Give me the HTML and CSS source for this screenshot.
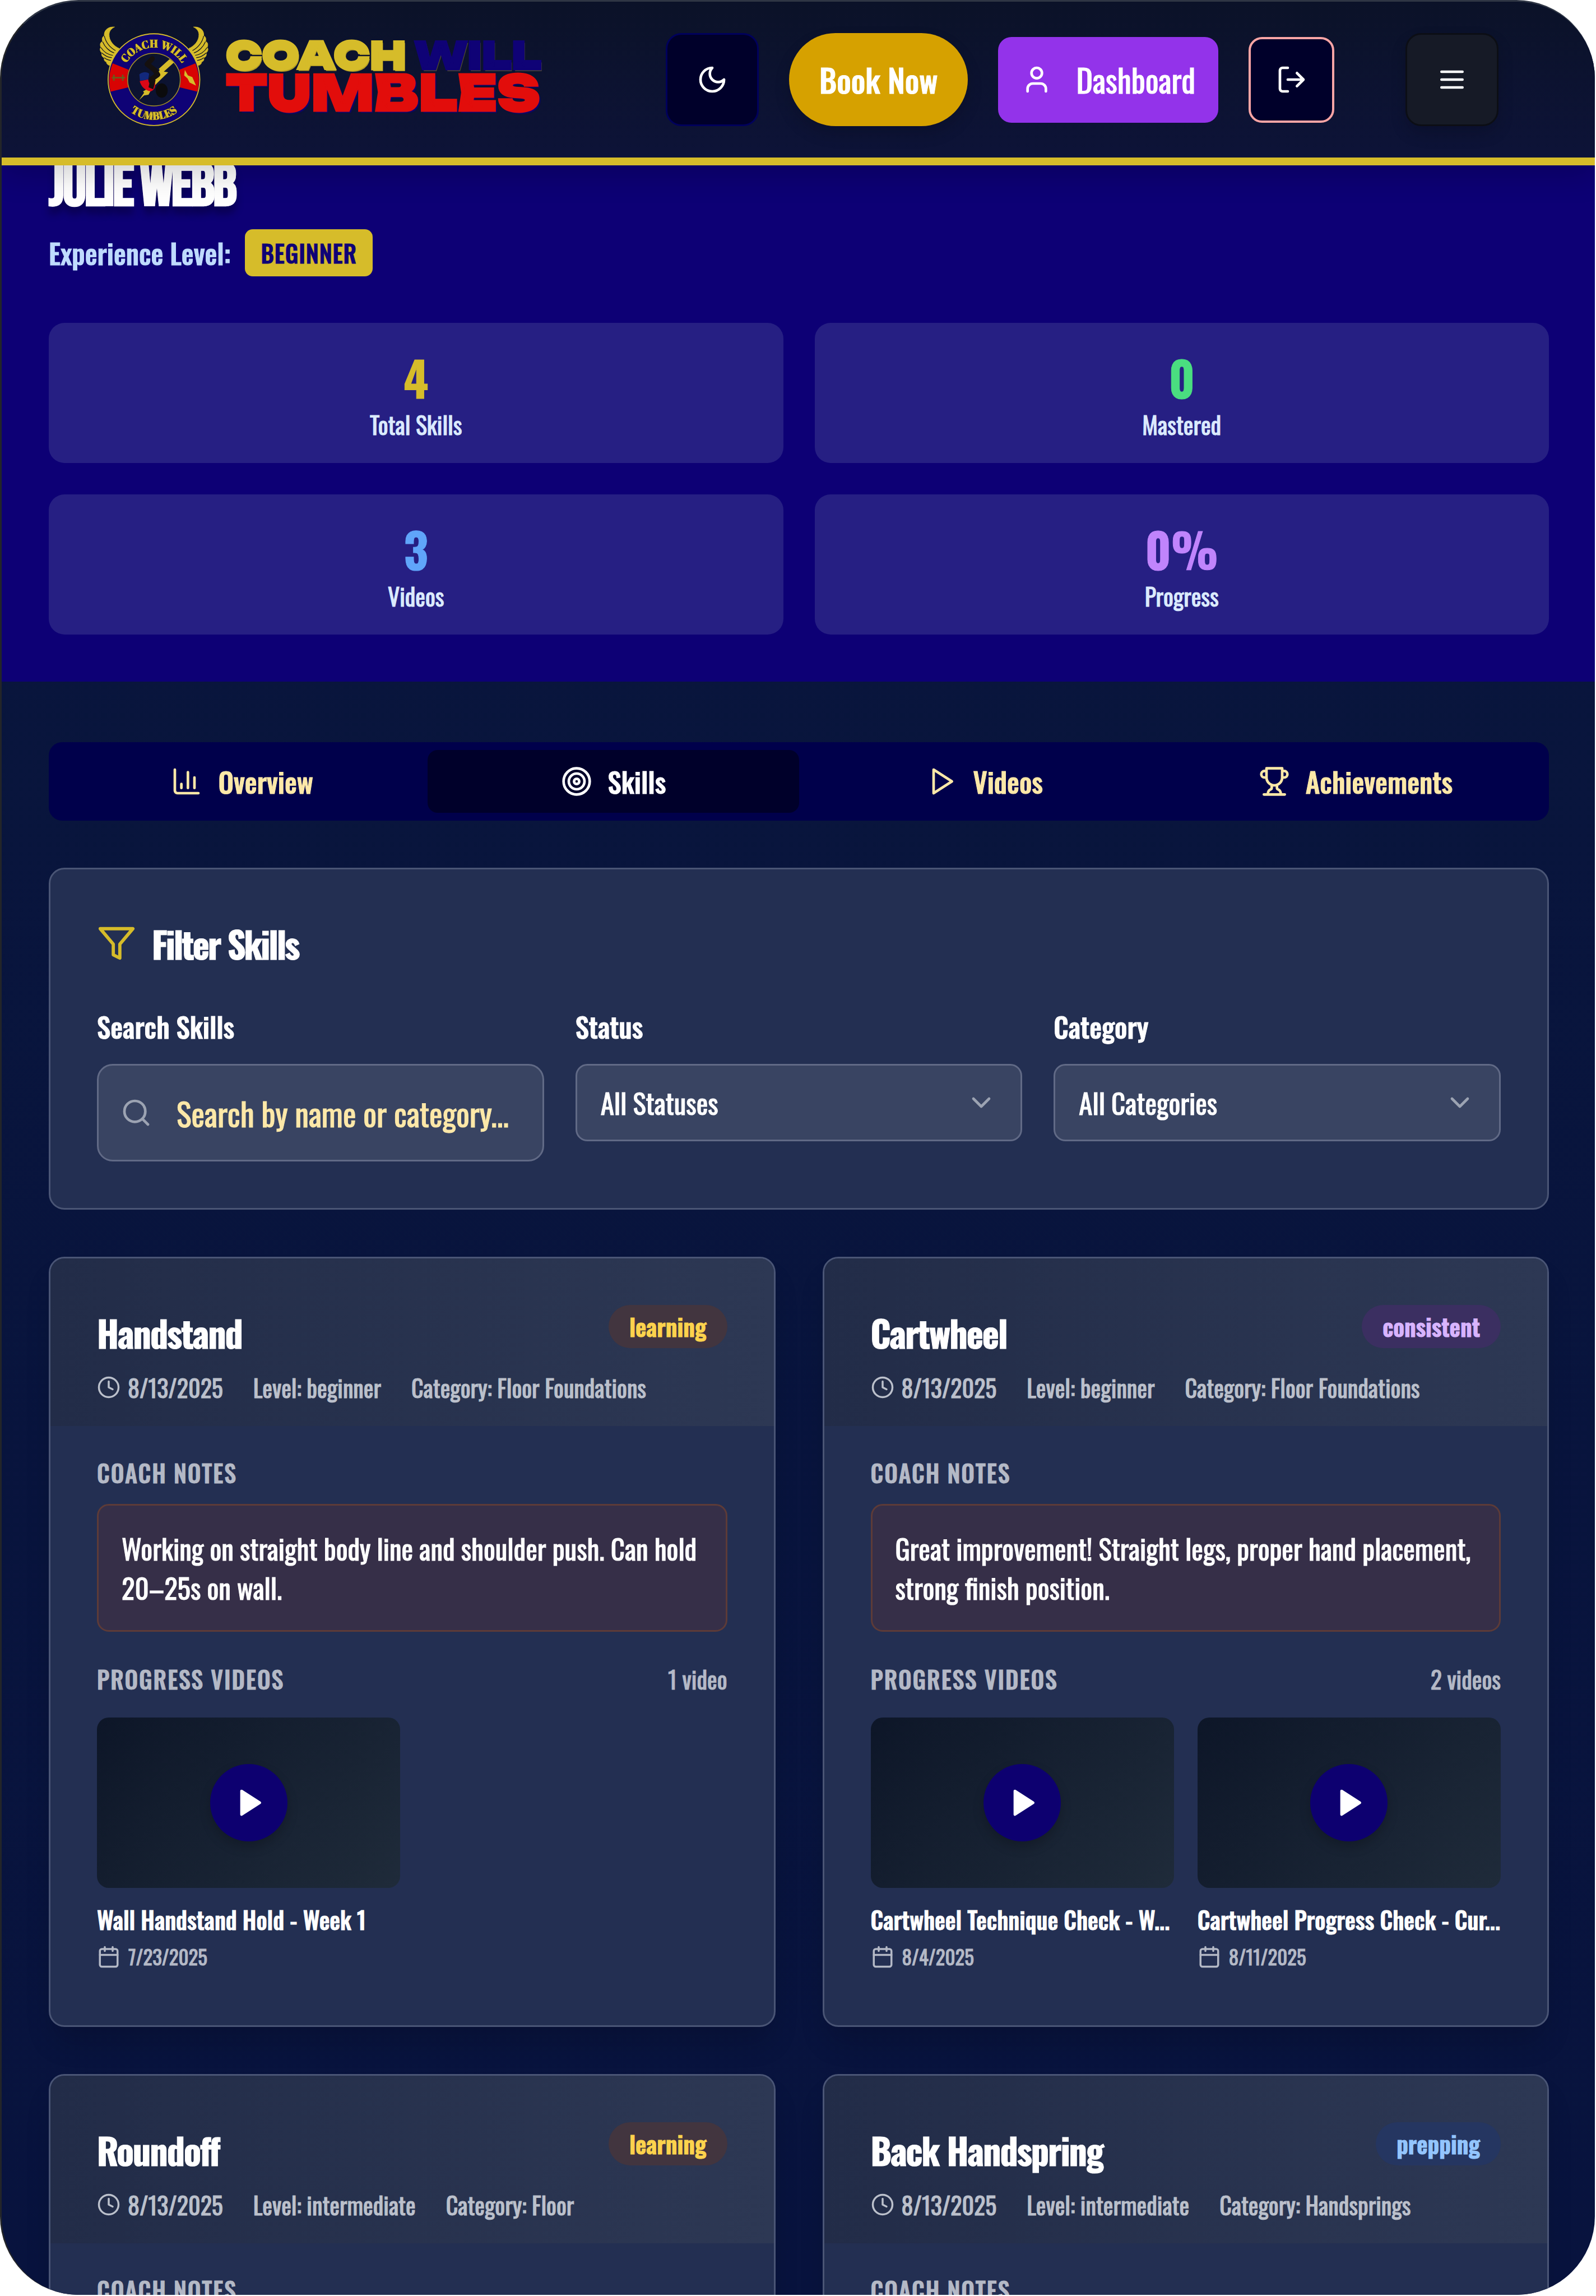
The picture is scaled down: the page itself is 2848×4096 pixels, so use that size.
FILE: index.html
```html
<!DOCTYPE html>
<html lang="en">
<head>
<meta charset="utf-8">
<title>Coach Will Tumbles - Skills</title>
<link rel="stylesheet" href="styles.css">
</head>
<body>
<svg class="sprite" aria-hidden="true">
  <symbol id="i-moon" viewBox="0 0 24 24"><path d="M12 3a6 6 0 0 0 9 9 9 9 0 1 1-9-9Z"/></symbol>
  <symbol id="i-user" viewBox="0 0 24 24"><path d="M19 21v-2a4 4 0 0 0-4-4H9a4 4 0 0 0-4 4v2"/><circle cx="12" cy="7" r="4"/></symbol>
  <symbol id="i-logout" viewBox="0 0 24 24"><path d="M9 21H5a2 2 0 0 1-2-2V5a2 2 0 0 1 2-2h4M16 17l5-5-5-5M21 12H9"/></symbol>
  <symbol id="i-menu" viewBox="0 0 24 24"><path d="M4 6h16M4 12h16M4 18h16"/></symbol>
  <symbol id="i-chart" viewBox="0 0 24 24"><path d="M3 3v16a2 2 0 0 0 2 2h16M18 17V9M13 17V5M8 17v-3"/></symbol>
  <symbol id="i-target" viewBox="0 0 24 24"><circle cx="12" cy="12" r="10"/><circle cx="12" cy="12" r="6"/><circle cx="12" cy="12" r="2"/></symbol>
  <symbol id="i-play" viewBox="0 0 24 24"><path d="M6 3l14 9-14 9z"/></symbol>
  <symbol id="i-trophy" viewBox="0 0 24 24"><path d="M6 9H4.500a2.500 2.500 0 0 1 0-5H6M18 9h1.500a2.500 2.500 0 0 0 0-5H18M4 22h16M10 14.660V17c0 .55-.47.98-.97 1.210C7.850 18.750 7 20.240 7 22M14 14.660V17c0 .55.47.98.97 1.210C16.150 18.750 17 20.240 17 22M18 2H6v7a6 6 0 0 0 12 0V2Z"/></symbol>
  <symbol id="i-filter" viewBox="0 0 24 24"><path d="M22 3H2l8 9.460V19l4 2v-8.540L22 3z"/></symbol>
  <symbol id="i-search" viewBox="0 0 24 24"><circle cx="11" cy="11" r="8"/><path d="M21 21l-4.300-4.300"/></symbol>
  <symbol id="i-down" viewBox="0 0 24 24"><path d="M6 9l6 6 6-6"/></symbol>
  <symbol id="i-clock" viewBox="0 0 24 24"><circle cx="12" cy="12" r="10"/><path d="M12 6v6l4 2"/></symbol>
  <symbol id="i-calendar" viewBox="0 0 24 24"><path d="M8 2v4M16 2v4M3 10h18"/><rect x="3" y="4" width="18" height="18" rx="2"/></symbol>
</svg>
<div class="window">
  <header class="site-header">
    <a class="brand" href="#">
      <svg class="emblem" viewBox="40 30 646 594" aria-hidden="true">
        <defs>
          <path id="arc-top" d="M173 348a190 190 0 0 1 380 0"/>
          <path id="arc-bottom" d="M128 348a235 235 0 0 0 470 0"/>
          <g id="wing">
            <path fill="#d6bc2a" stroke="#d6bc2a" stroke-width="3" d="M130 37C88 34 66 60 70 90C58 92 54 108 60 124C46 124 42 142 50 158C40 166 46 182 56 190C50 204 60 216 70 218C66 232 72 240 82 242C82 254 92 262 104 264L158 164C126 150 96 118 98 80C99 60 112 46 130 37Z"/>
            <path fill="none" stroke="#0b1020" stroke-width="4" d="M70 90C78 128 104 160 136 176M60 124C72 154 98 180 128 190M50 158C66 184 92 200 120 204M56 190C74 208 94 216 114 218M70 218C82 228 96 232 108 234"/>
          </g>
        </defs>
        <use href="#wing"/>
        <use href="#wing" transform="translate(725 0) scale(-1 1)"/>
        <circle cx="362" cy="347" r="213" fill="none" stroke="#0f0276" stroke-width="112"/>
        <path fill="#d80303" d="M119 251L214 289A158 158 0 0 0 212 392L107 418A266 266 0 0 1 119 251ZM606 251L511 289A158 158 0 0 1 513 392L618 418A266 266 0 0 0 606 251Z"/>
        <circle cx="362" cy="347" r="270" fill="none" stroke="#d6bc2a" stroke-width="6"/>
        <circle cx="362" cy="347" r="155" fill="none" stroke="#a8932a" stroke-width="5"/>
        <path fill="#d6bc2a" d="M454 226L480 246L420 300L446 304L384 364L350 400L330 436L304 440L274 468L304 424L298 416L320 404L396 290L390 284Z"/>
        <path fill="none" stroke="#15100f" stroke-width="30" stroke-linecap="round" stroke-linejoin="round" d="M352 224L322 256L366 290L384 318L348 344L350 390"/>
        <path fill="#12287c" d="M276 316C296 300 320 300 334 312L328 346L280 354Z"/>
        <path fill="#dc0716" d="M278 356L328 346C332 372 344 386 368 362C374 388 366 408 344 416C308 412 286 386 278 356Z"/>
        <path fill="#15100f" d="M344 330L372 350L358 404L330 392Z"/>
        <ellipse cx="408" cy="411" rx="35" ry="42" fill="#0b0b0d"/>
        <path fill="none" stroke="#6b5c1a" stroke-width="9" d="M114 336H192M126 318V354M178 318V354"/>
        <path fill="#d6bc2a" d="M544 290L562 322L588 332L610 382L572 364L560 340L540 322Z"/>
        <g class="emblem-text">
          <text><textPath href="#arc-top" startOffset="50%">COACH WILL</textPath></text>
          <text><textPath href="#arc-bottom" startOffset="50%">TUMBLES</textPath></text>
        </g>
      </svg>
      <span class="wordmark">
        <span class="wordmark-top">COACH <span class="wordmark-will">WILL</span></span>
        <span class="wordmark-bottom">TUMBLES</span>
      </span>
    </a>
    <div class="actions">
      <button class="btn-square btn-theme" type="button" aria-label="Toggle theme"><svg class="icon"><use href="#i-moon"/></svg></button>
      <button class="btn-book" type="button">Book Now</button>
      <a class="btn-dashboard" href="#"><svg class="icon"><use href="#i-user"/></svg>Dashboard</a>
      <button class="btn-logout" type="button" aria-label="Log out"><svg class="icon"><use href="#i-logout"/></svg></button>
      <button class="btn-square btn-menu" type="button" aria-label="Menu"><svg class="icon"><use href="#i-menu"/></svg></button>
    </div>
  </header>

  <section class="hero">
    <h1 class="hero-name">JULIE WEBB</h1>
    <p class="level">Experience Level: <span class="level-badge">BEGINNER</span></p>
    <div class="stats">
      <div class="stat"><span class="stat-value gold">4</span><span class="stat-label">Total Skills</span></div>
      <div class="stat"><span class="stat-value green">0</span><span class="stat-label">Mastered</span></div>
      <div class="stat"><span class="stat-value blue">3</span><span class="stat-label">Videos</span></div>
      <div class="stat"><span class="stat-value purple">0%</span><span class="stat-label">Progress</span></div>
    </div>
  </section>

  <main class="content">
    <nav class="tabs">
      <button class="tab" type="button"><svg class="icon"><use href="#i-chart"/></svg>Overview</button>
      <button class="tab tab-active" type="button"><svg class="icon"><use href="#i-target"/></svg>Skills</button>
      <button class="tab" type="button"><svg class="icon"><use href="#i-play"/></svg>Videos</button>
      <button class="tab" type="button"><svg class="icon"><use href="#i-trophy"/></svg>Achievements</button>
    </nav>

    <section class="filters">
      <h2 class="filters-title"><svg class="icon-large"><use href="#i-filter"/></svg>Filter Skills</h2>
      <div class="filters-grid">
        <div class="field">
          <label for="search">Search Skills</label>
          <div class="control"><input id="search" type="text" placeholder="Search by name or category..."><svg class="icon control-search"><use href="#i-search"/></svg></div>
        </div>
        <div class="field">
          <label for="status">Status</label>
          <div class="control"><select id="status"><option>All Statuses</option></select><svg class="icon control-down"><use href="#i-down"/></svg></div>
        </div>
        <div class="field">
          <label for="category">Category</label>
          <div class="control"><select id="category"><option>All Categories</option></select><svg class="icon control-down"><use href="#i-down"/></svg></div>
        </div>
      </div>
    </section>

    <div class="skills">
      <article class="card">
        <header class="card-head">
          <div class="card-top"><h3>Handstand</h3><span class="pill learning">learning</span></div>
          <div class="meta"><span class="stamp"><svg class="icon-small"><use href="#i-clock"/></svg>8/13/2025</span><span>Level: beginner</span><span>Category: Floor Foundations</span></div>
        </header>
        <div class="card-body">
          <h4>COACH NOTES</h4>
          <p class="note">Working on straight body line and shoulder push. Can hold 20–25s on wall.</p>
          <div class="videos-head"><h4>PROGRESS VIDEOS</h4><span>1 video</span></div>
          <div class="videos">
            <div class="video">
              <button class="thumb" type="button" aria-label="Play video"><span class="play"><svg class="icon"><use href="#i-play"/></svg></span></button>
              <p class="video-title">Wall Handstand Hold - Week 1</p>
              <p class="video-date"><svg class="icon-small"><use href="#i-calendar"/></svg>7/23/2025</p>
            </div>
          </div>
        </div>
      </article>
      <article class="card">
        <header class="card-head">
          <div class="card-top"><h3>Cartwheel</h3><span class="pill consistent">consistent</span></div>
          <div class="meta"><span class="stamp"><svg class="icon-small"><use href="#i-clock"/></svg>8/13/2025</span><span>Level: beginner</span><span>Category: Floor Foundations</span></div>
        </header>
        <div class="card-body">
          <h4>COACH NOTES</h4>
          <p class="note">Great improvement! Straight legs, proper hand placement, strong finish position.</p>
          <div class="videos-head"><h4>PROGRESS VIDEOS</h4><span>2 videos</span></div>
          <div class="videos">
            <div class="video">
              <button class="thumb" type="button" aria-label="Play video"><span class="play"><svg class="icon"><use href="#i-play"/></svg></span></button>
              <p class="video-title">Cartwheel Technique Check - W...</p>
              <p class="video-date"><svg class="icon-small"><use href="#i-calendar"/></svg>8/4/2025</p>
            </div>
            <div class="video">
              <button class="thumb" type="button" aria-label="Play video"><span class="play"><svg class="icon"><use href="#i-play"/></svg></span></button>
              <p class="video-title">Cartwheel Progress Check - Cur...</p>
              <p class="video-date"><svg class="icon-small"><use href="#i-calendar"/></svg>8/11/2025</p>
            </div>
          </div>
        </div>
      </article>
      <article class="card">
        <header class="card-head">
          <div class="card-top"><h3>Roundoff</h3><span class="pill learning">learning</span></div>
          <div class="meta"><span class="stamp"><svg class="icon-small"><use href="#i-clock"/></svg>8/13/2025</span><span>Level: intermediate</span><span>Category: Floor</span></div>
        </header>
        <div class="card-body"><h4>COACH NOTES</h4></div>
      </article>
      <article class="card">
        <header class="card-head">
          <div class="card-top"><h3>Back Handspring</h3><span class="pill prepping">prepping</span></div>
          <div class="meta"><span class="stamp"><svg class="icon-small"><use href="#i-clock"/></svg>8/13/2025</span><span>Level: intermediate</span><span>Category: Handsprings</span></div>
        </header>
        <div class="card-body"><h4>COACH NOTES</h4></div>
      </article>
    </div>
  </main>
</div>
</body>
</html>
```
FILE: styles.css
```css
* { box-sizing: border-box; margin: 0; }

body {
  background: #fff;
  color: #fff;
  font-family: Oswald, "Open Sans Condensed", "Liberation Sans", sans-serif;
  font-size: 42px;
  line-height: 56px;
  font-weight: 400;
  -webkit-text-stroke: 1px currentColor;
}

button, input, select { font: inherit; color: inherit; }
a { color: inherit; text-decoration: none; }

.sprite { display: none; }

.icon, .icon-small, .icon-large {
  flex: none;
  width: 56px;
  height: 56px;
  fill: none;
  stroke: currentColor;
  stroke-width: 2;
  stroke-linecap: round;
  stroke-linejoin: round;
}
.icon-small { width: 42px; height: 42px; }
.icon-large { width: 70px; height: 70px; color: #d6bc2a; }

.window {
  height: calc(100vh - 2px);
  margin-right: 2px;
  overflow: hidden;
  border-top: 3px solid #2f3644;
  border-left: 3px solid #232529;
  border-radius: 140px;
  background: linear-gradient(#09163c, #08133e);
}

/* Header */
.site-header {
  position: sticky;
  top: 0;
  z-index: 2;
  display: flex;
  align-items: center;
  justify-content: space-between;
  height: 292px;
  padding: 0 172px 0 174px;
  border-bottom: 14px solid #d6bc2a;
  background: linear-gradient(#0b1228, #0d1338);
  box-shadow: 0 14px 52px rgba(0, 0, 0, 0.2);
}
.brand { display: flex; align-items: center; gap: 30px; margin-bottom: 12px; }
.emblem { width: 196px; height: 180px; }
.emblem-text {
  fill: #d6bc2a;
  stroke: #15103a;
  stroke-width: 5;
  paint-order: stroke;
  font: 700 64px "Abril Fatface", "Liberation Serif", serif;
  text-anchor: middle;
}
.wordmark {
  display: flex;
  flex-direction: column;
  font-family: Unbounded, Inter, sans-serif;
  font-weight: 900;
  white-space: nowrap;
  -webkit-text-stroke: 3px currentColor;
}
.wordmark-top { color: #d6bc2a; font-size: 68px; line-height: 58px; text-shadow: 2px 3px 0 #b39d25; }
.wordmark-will { color: #0f0276; text-shadow: 2px 3px 0 #4f4a30; }
.wordmark-bottom { color: #e20d0b; font-size: 88px; line-height: 74px; text-shadow: 3px 3px 2px #0f0276; }

.actions { display: flex; align-items: center; gap: 54px; }
.actions button, .btn-dashboard { display: flex; align-items: center; justify-content: center; padding: 0; border: 0; }
.actions .btn-square { width: 166px; height: 166px; border: 3px solid #00005c; border-radius: 28px; background: #00002a; }
.actions .btn-menu { margin-left: 73px; border-color: #0c0e15; background: #161a26; box-shadow: 0 14px 28px rgba(0, 0, 0, 0.15); }
.actions .btn-book {
  height: 166px;
  padding: 0 54px;
  border-radius: 84px;
  background: #d6a100;
  font-size: 56px;
  font-weight: 500;
  box-shadow: 0 14px 28px rgba(0, 0, 0, 0.15);
}
.btn-dashboard { gap: 42px; height: 153px; padding: 0 41px; border-radius: 24px; background: #9333ea; font-size: 56px; }
.actions .btn-logout { width: 153px; height: 153px; border: 4px solid #fca5a5; border-radius: 24px; background: #00002a; }

/* Student summary */
.hero { margin-top: -13px; padding: 0 82px 84px 84px; background: #0d0075; }
.hero-name {
  font: 700 105px/105px "Bebas Neue", Oswald, sans-serif;
  letter-spacing: -3px;
  text-shadow: 0 14px 14px rgba(0, 0, 0, 0.3);
}
.level { display: flex; align-items: center; gap: 26px; margin-top: 22px; color: #bfdbfe; font-size: 49px; font-weight: 500; }
.level-badge {
  padding: 14px 28px;
  border-radius: 14px;
  background: #d6bc2a;
  color: #0f0276;
  font-size: 42px;
  letter-spacing: 1px;
}
.stats { display: grid; grid-template-columns: 1fr 1fr; gap: 56px; margin-top: 83px; }
.stat { display: flex; flex-direction: column; align-items: center; padding: 41px; border-radius: 28px; background: #261f83; }
.stat-value { font-size: 84px; line-height: 112px; font-weight: 700; }
.stat-label { color: #dbeafe; }
.gold { color: #d6bc2a; }
.green { color: #4ade80; }
.blue { color: #60a5fa; }
.purple { color: #c084fc; }

/* Main column */
.content { display: flex; flex-direction: column; gap: 84px; padding: 108px 82px 84px 84px; }
.tabs { display: grid; grid-template-columns: repeat(4, 1fr); padding: 14px; border-radius: 24px; background: #00004b; }
.tab {
  display: flex;
  align-items: center;
  justify-content: center;
  gap: 28px;
  height: 112px;
  padding: 0;
  border: 0;
  border-radius: 18px;
  background: none;
  color: #fde8a8;
  font-size: 49px;
  font-weight: 500;
}
.tab-active { background: #00002a; color: #fff; }

.filters { padding: 83px; border: 3px solid #4a5575; border-radius: 28px; background: #232f52; }
.filters-title {
  display: flex;
  align-items: center;
  gap: 28px;
  margin-bottom: 64px;
  font-size: 64px;
  line-height: 98px;
  font-weight: 700;
  letter-spacing: -3px;
}
.filters-grid { display: grid; grid-template-columns: repeat(3, 1fr); gap: 56px; }
.field { display: flex; flex-direction: column; gap: 32px; font-size: 49px; }
.field label { line-height: 70px; font-weight: 500; }
.control { position: relative; display: flex; }
.control input, .control select {
  appearance: none;
  width: 100%;
  height: 138px;
  padding: 0 42px;
  border: 3px solid #616a86;
  border-radius: 21px;
  background: #394462;
  line-height: 84px;
}
.control input { height: 174px; padding: 0 42px 0 139px; border-radius: 28px; font-size: 56px; }
.control input::placeholder { color: #fde8a8; opacity: 1; }
.control .icon { position: absolute; top: 50%; margin-top: -28px; color: #9ca3b2; pointer-events: none; }
.control-search { left: 42px; }
.control-down { right: 45px; }

/* Skill cards */
.skills { display: grid; grid-template-columns: 1fr 1fr; gap: 84px; }
.card {
  overflow: hidden;
  border: 3px solid #4a5575;
  border-radius: 28px;
  background: #232f52;
  box-shadow: 0 35px 52px -10px rgba(0, 0, 0, 0.15);
}
.card-head { padding: 83px 83px 41px; background: linear-gradient(90deg, #222c48, #2d3854); }
.card-top { display: flex; align-items: flex-start; justify-content: space-between; margin-bottom: 21px; }
.card-top h3 { font-size: 64px; line-height: 98px; font-weight: 700; letter-spacing: -2px; }
.pill { padding: 10px 37px 11px; border-radius: 39px; font-weight: 600; }
.learning { background: #42353f; color: #fcd34d; }
.consistent { background: #3b2f61; color: #d8b4fe; }
.prepping { background: #253661; color: #93c5fd; }
.meta { display: flex; gap: 54px; color: #bbc0cb; }
.stamp { display: flex; align-items: center; gap: 13px; }
.card-body { padding: 55px 83px 98px; color: #b4b9c6; }
.card-body h4 { font-size: 42px; font-weight: 500; letter-spacing: 2px; }
.note {
  margin: 28px 0 56px;
  padding: 41px;
  border: 3px solid #5d3b38;
  border-radius: 21px;
  background: #362f48;
  color: #fff;
  font-size: 49px;
  line-height: 70px;
}
.videos-head { display: flex; justify-content: space-between; margin-bottom: 41px; }
.videos { display: grid; grid-template-columns: 1fr 1fr; gap: 42px; }
.video { min-width: 0; }
.thumb {
  display: flex;
  align-items: center;
  justify-content: center;
  width: 100%;
  aspect-ratio: 16 / 9;
  padding: 0;
  border: 0;
  border-radius: 21px;
  background: linear-gradient(135deg, #0d1628, #1f2b3a);
}
.play {
  display: flex;
  align-items: center;
  justify-content: center;
  width: 138px;
  height: 138px;
  padding-left: 2px;
  border-radius: 50%;
  background: #0d0070;
  color: #fff;
  box-shadow: 0 10px 20px rgba(0, 0, 0, 0.2);
}
.play .icon { fill: currentColor; }
.video-title { margin-top: 24px; color: #fff; font-weight: 500; line-height: 64px; white-space: nowrap; }
.video-date { display: flex; align-items: center; gap: 14px; margin-top: 10px; font-size: 35px; line-height: 49px; }
```
